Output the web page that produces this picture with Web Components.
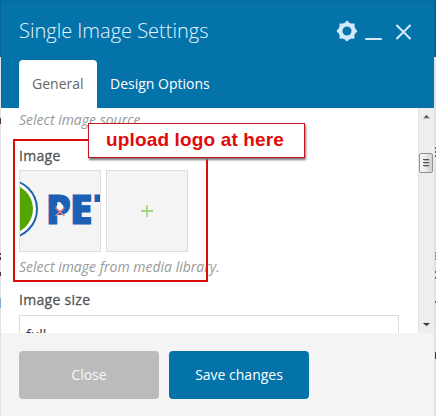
<!DOCTYPE html>
<html lang="en">
<head>
<meta charset="utf-8">
<title>Single Image Settings</title>
<style>
html,body{margin:0;width:436px;height:416px;overflow:hidden;background:#fff;font-family:"Open Sans",sans-serif}
</style>
</head>
<body>
<settings-page></settings-page>
<script>
function define(name, html) {
  const template = document.createElement('template');
  template.innerHTML = html;
  customElements.define(name, class extends HTMLElement {
    constructor() {
      super();
      this.attachShadow({mode: 'open'}).append(template.content.cloneNode(true));
    }
  });
}

define('panel-header', `
<style>
:host{display:flex;flex-direction:column;justify-content:space-between;height:108px;box-sizing:border-box;padding:0 18px;background:linear-gradient(#046da2 0 2px,#0473aa 3px)}
.top{display:flex;justify-content:space-between;height:60px}
h1{margin:16px 0 0;font-size:20px;line-height:30px;font-weight:300;color:#e4f5ff;white-space:nowrap}
svg{display:block;width:80px;height:30px;margin:17px 3px 0 0}
nav{display:flex}
</style>
<div class="top"><h1><slot></slot></h1>
<svg viewBox="0 0 80 30" fill="none" stroke="#d3eafb">
<circle cx="14" cy="14" r="6.6" stroke-width="4.2"/>
<circle cx="14" cy="14" r="8.6" stroke-width="3.2" stroke-linecap="round" pathLength="80" stroke-dasharray="0.1 9.9"/>
<path d="M33 22H48" stroke-width="2.2" stroke-linecap="round"/>
<path d="M64 8.500L77 21.500M77 8.500L64 21.500" stroke-width="2.1" stroke-linecap="round"/>
</svg></div>
<nav><slot name="tabs"></slot></nav>`);

define('panel-tab', `
<style>
:host{display:block;height:48px;box-sizing:border-box;padding:0 13px;font-size:14px;line-height:47px;color:#fff;white-space:nowrap;border-radius:4px 4px 0 0}
:host([active]){width:78px;background:#fff;color:#666}
</style><slot></slot>`);

define('thumb-box', `
<style>
:host{display:flex;align-items:center;justify-content:center;box-sizing:border-box;width:82px;height:82px;border:1px solid #ddd;background:#f4f4f4;overflow:hidden}
::slotted(svg){display:block;flex:none}
</style><slot></slot>`);

define('scroll-bar', `
<style>
:host{display:block;width:16px;flex:none;background:#eee;border-left:1px solid #e3e3e3;box-sizing:border-box}
svg{display:block}
</style>
<svg width="15" height="225" viewBox="0 0 15 225">
<defs><linearGradient id="g"><stop stop-color="#fafafa"/><stop offset=".5" stop-color="#eaeaea"/><stop offset="1" stop-color="#cfcfcf"/></linearGradient>
<linearGradient id="a" x1="0" x2="0" y1="0" y2="1"><stop stop-color="#222"/><stop offset="1" stop-color="#888"/></linearGradient></defs>
<path d="M4 10.500L7.500 7L11 10.500Z" fill="url(#a)"/>
<rect x=".5" y="45.500" width="13" height="19" rx="1.500" fill="url(#g)" stroke="#929292"/>
<path d="M4 51.500h6M4 54.500h6M4 57.500h6" stroke="#555"/><path d="M5 52.500h6M5 55.500h6M5 58.500h6" stroke="#bbb"/>
<path d="M4 215H11L7.500 218.500Z" fill="url(#a)"/>
</svg>`);

define('panel-button', `
<style>
:host{display:block;width:140px;height:48px;border-radius:4px;background:#bbb;color:#f8f8f8;font-size:14px;line-height:47px;text-align:center}
:host([primary]){background:#0473aa;color:#fff}
</style><slot></slot>`);

define('note-callout', `
<style>
:host{display:block;box-sizing:border-box;border:1px solid #c4161c;background:#fff;box-shadow:1px 2px 2px #777;color:#e00b0b;font:bold 19px/32px "Liberation Sans",sans-serif;padding-left:17px;letter-spacing:.15px;white-space:nowrap}
</style><slot></slot>`);

define('image-form', `
<style>
:host{display:block;flex:1;padding:2px 19px 0 18px;box-sizing:border-box;overflow:hidden;font-size:14px;line-height:20px;background:#fff}
.hint{height:20px;font-style:italic;color:#999;white-space:nowrap}
.label{height:20px;color:#555}
.first{margin-top:17px}
.thumbs{display:flex;gap:5px;margin:3px 0 5px}
.size{margin-top:14px}
.field{box-sizing:border-box;height:36px;margin-top:4px;border:1px solid #ddd;padding:0 6px;line-height:37px;color:#333}
.lab{font-size:14px;letter-spacing:.3px;-webkit-text-stroke:.3px #555;line-height:18px}
</style>
<div class="hint">Select image source.</div>
<div class="label first lab">Image</div>
<div class="thumbs">
<thumb-box><svg width="80" height="80" viewBox="0 0 80 80">
<circle cx="-12" cy="38" r="29" fill="#fff" stroke="#1d63ad" stroke-width="2"/>
<circle cx="-12" cy="38" r="25" fill="#55a500"/>
<g font-family="Open Sans, sans-serif" font-weight="800" font-size="40" fill="#1b60b4" stroke="#1b60b4" stroke-width="1"><text y="53"><tspan x="26" textLength="25" lengthAdjust="spacingAndGlyphs">P</tspan><tspan x="50" textLength="22.500" lengthAdjust="spacingAndGlyphs">E</tspan><tspan x="74">T</tspan></text></g>
<circle cx="40" cy="36.500" r="3.500" fill="#fff"/><path d="M35.500 45L44.500 36.500M35.500 36.500L44.500 45" stroke="#e98287" stroke-width="1.600"/>
</svg></thumb-box>
<thumb-box><svg width="12" height="12" viewBox="0 0 12 12"><path d="M0 6H12M6 0V12" stroke="#8bd05d" stroke-width="1.300"/></svg></thumb-box>
</div>
<div class="hint">Select image from media library.</div>
<div class="label size lab">Image size</div>
<div class="field">full</div>`);

define('settings-page', `
<style>
:host{display:block;position:relative;width:436px;height:416px;overflow:hidden;background:#f1f1f1}
.panel{position:relative;margin:0 2px 0 1px;height:416px;display:flex;flex-direction:column}
.body{display:flex;height:225px}
.foot{display:flex;gap:10px;flex:1;padding:18px;background:#f4f4f4;box-sizing:border-box}
.back,.rect,note-callout{position:absolute}
.back{left:0;top:0}
.rect{left:13px;top:139px;width:195px;height:143px;box-sizing:border-box;border:2px solid #da0d0d}
note-callout{left:88px;top:123px;width:217px;height:35px}
</style>
<svg class="back" width="436" height="416"><path d="M0 0H436V57H0Z" fill="#046599"/><path d="M0 57H1V416H0ZM434 57H436V416H434Z" fill="#e2e2e2"/>
<path d="M0 118v6M0 253v2M0 257v3M0 272v4" stroke="#54344e" stroke-width="2"/><path d="M0 298v10" stroke="#86aad0" stroke-width="2"/>
<path d="M435 148h1M435 152h1M435 156h1M435 272h1M435 278h1M435 302h1" stroke="#2477ad" stroke-width="2"/><path d="M435 253h1M435 256h1M435 259h1" stroke="#333"/><path d="M435.500 352v7" stroke="#174e7e"/></svg>
<div class="panel">
<panel-header>Single Image Settings<panel-tab slot="tabs" active>General</panel-tab><panel-tab slot="tabs">Design Options</panel-tab></panel-header>
<div class="body"><image-form></image-form><scroll-bar></scroll-bar></div>
<div class="foot"><panel-button>Close</panel-button><panel-button primary>Save changes</panel-button></div>
</div>
<div class="rect"></div>
<note-callout>upload logo at here</note-callout>`);
</script>
</body>
</html>
